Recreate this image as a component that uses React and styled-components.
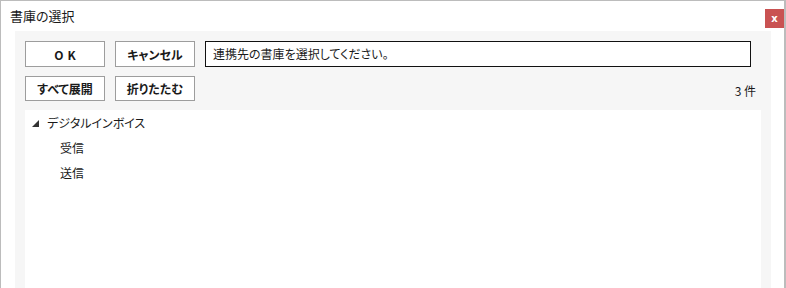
import React from 'react';
import styled, { createGlobalStyle } from 'styled-components';

const GlobalStyle = createGlobalStyle`
    html, body {
        margin: 0;
        padding: 0;
        background: #ffffff;
    }
    body {
        font-family: "Noto Sans CJK JP", "Noto Sans", sans-serif;
        font-feature-settings: "palt";
        color: #1a1a1a;
    }
`

const Window = styled.div`
    box-sizing: border-box;
    width: 786px;
    height: 288px;
    border: 1px solid #bcbcbc;
    border-bottom: none;
    border-right-width: 2px;
    background: #ffffff;
    display: flex;
    flex-direction: column;
    overflow: hidden;
`

const TitleBar = styled.div`
    display: flex;
    align-items: center;
    justify-content: space-between;
    height: 30px;
    padding: 0 0 0 9px;
    flex-shrink: 0;
`

const Title = styled.span`
    font-size: 13px;
    line-height: 1;
    margin-top: -1px;
`

const CloseButton = styled.button`
    width: 19px;
    height: 19px;
    margin-top: 5px;
    padding: 0;
    border: none;
    background: #c95252;
    color: #ffffff;
    font-family: "DejaVu Sans", sans-serif;
    font-weight: bold;
    font-size: 10px;
    line-height: 19px;
    text-align: center;
`

const Panel = styled.div`
    flex: 1;
    margin-left: 14px;
    width: 756px;
    box-sizing: border-box;
    background: #f6f6f6;
    padding: 10px 10px 0 10px;
    display: flex;
    flex-direction: column;
    gap: 9px;
`

const Row = styled.div`
    display: flex;
    align-items: center;
    gap: 10px;
    height: ${p => p.h}px;
`

const Button = styled.button`
    box-sizing: border-box;
    width: 80px;
    height: ${p => p.h}px;
    border: 1px solid #9d9d9d;
    background: #ffffff;
    font-family: inherit;
    font-feature-settings: "palt";
    font-weight: bold;
    font-size: 12px;
    color: #1a1a1a;
    padding: 0;
    letter-spacing: ${p => p.spread ? '4px' : '0'};
    text-indent: ${p => p.spread ? '4px' : '0'};
`

const Message = styled.div`
    box-sizing: border-box;
    width: 546px;
    height: 26px;
    border: 1px solid #111111;
    background: #ffffff;
    padding: 0 7px;
    font-size: 12px;
    line-height: 24px;
`

const Count = styled.span`
    margin-left: auto;
    margin-right: 5px;
    margin-top: 3px;
    font-size: 12px;
`

const Tree = styled.div`
    flex: 1;
    background: #ffffff;
`

const Node = styled.div`
    display: flex;
    align-items: center;
    height: 25px;
    padding-left: ${p => p.depth * 28 + 7}px;
    font-size: 12px;
`

const Arrow = styled.span`
    display: inline-block;
    width: 0;
    height: 0;
    border-left: 7px solid transparent;
    border-bottom: 7px solid #333333;
    margin-right: 8px;
    margin-top: 1px;
`

const tree = [
    { label: 'デジタルインボイス', depth: 0, open: true },
    { label: '受信', depth: 1 },
    { label: '送信', depth: 1 },
];

function App() {
    return (
        <>
            <GlobalStyle />
            <Window>
                <TitleBar>
                    <Title>書庫の選択</Title>
                    <CloseButton>x</CloseButton>
                </TitleBar>
                <Panel>
                    <Row h={26}>
                        <Button h={26} spread>OK</Button>
                        <Button h={26}>キャンセル</Button>
                        <Message>連携先の書庫を選択してください。</Message>
                    </Row>
                    <Row h={25}>
                        <Button h={25}>すべて展開</Button>
                        <Button h={25}>折りたたむ</Button>
                        <Count>3 件</Count>
                    </Row>
                    <Tree>
                        {tree.map((n, i) => (
                            <Node key={i} depth={n.depth}>
                                {n.open && <Arrow />}
                                {n.label}
                            </Node>
                        ))}
                    </Tree>
                </Panel>
            </Window>
        </>
    );
}

export default App;
